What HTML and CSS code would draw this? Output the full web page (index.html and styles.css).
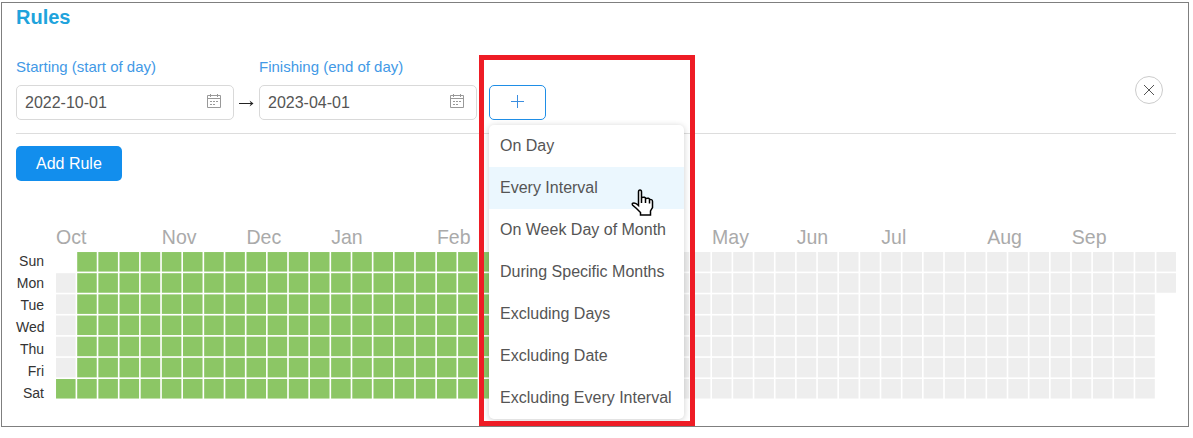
FILE: index.html
```html
<!DOCTYPE html>
<html lang="en">
<head>
<meta charset="utf-8">
<title>Rules</title>
<link rel="stylesheet" href="styles.css">
</head>
<body>
<main class="panel">
  <h1 class="title">Rules</h1>
  <section class="rule">
    <div class="range">
      <div class="field">
        <label class="field-label" for="start">Starting (start of day)</label>
        <div class="date-box">
          <input class="date-input" id="start" type="text" value="2022-10-01">
          <svg class="date-icon" viewBox="0 0 14 14" aria-hidden="true"><path d="M.5 1.5h13v12H.5zM.5 4.5h13M3.5 0v3M10.5 0v3M3 7.5h2M6 7.5h2M9 7.5h2M3 10.5h2M6 10.5h2"/></svg>
        </div>
      </div>
      <svg class="arrow" viewBox="0 0 15 9" aria-hidden="true"><path class="shaft" d="M0 4.5h14"/><path d="M10.5 1.5L14.5 4.5L10.5 7.5L12 4.5z"/></svg>
      <div class="field">
        <label class="field-label" for="finish">Finishing (end of day)</label>
        <div class="date-box">
          <input class="date-input" id="finish" type="text" value="2023-04-01">
          <svg class="date-icon" viewBox="0 0 14 14" aria-hidden="true"><path d="M.5 1.5h13v12H.5zM.5 4.5h13M3.5 0v3M10.5 0v3M3 7.5h2M6 7.5h2M9 7.5h2M3 10.5h2M6 10.5h2"/></svg>
        </div>
      </div>
      <div class="picker">
        <button class="plus" type="button" aria-label="Add condition"><svg class="plus-icon" viewBox="0 0 13 13" aria-hidden="true"><path d="M6.5 0v13M0 6.5h13"/></svg></button>
        <div class="menu" role="menu">
          <button class="item" type="button" role="menuitem">On Day</button>
          <button class="item item-active" type="button" role="menuitem">Every Interval</button>
          <button class="item" type="button" role="menuitem">On Week Day of Month</button>
          <button class="item" type="button" role="menuitem">During Specific Months</button>
          <button class="item" type="button" role="menuitem">Excluding Days</button>
          <button class="item" type="button" role="menuitem">Excluding Date</button>
          <button class="item" type="button" role="menuitem">Excluding Every Interval</button>
        </div>
        <svg class="hand" viewBox="0 0 23 27" aria-hidden="true"><path d="M7.5 16.500V3Q7.500 1 9 1T10.500 3V8.500Q14.500 7.500 14.500 9.500Q18.500 8.500 18.500 10.500Q21.500 10 21.500 12.500V18.500L19.500 22V26H9.500V23.500L5.500 19.500L1.500 16Q0.500 14 3 14Q5 14 7.500 16.500zM10.500 8v6M14.500 9v5M18.500 10.500v4"/></svg>
        <div class="highlight"></div>
      </div>
    </div>
    <button class="close" type="button" aria-label="Remove rule"><svg class="close-icon" viewBox="0 0 12 12" aria-hidden="true"><path d="M1 1l10 10M11 1L1 11"/></svg></button>
  </section>
  <button class="add" type="button">Add Rule</button>
  <section class="calendar">
    <div class="days"><span>Sun</span><span>Mon</span><span>Tue</span><span>Wed</span><span>Thu</span><span>Fri</span><span>Sat</span></div>
    <svg class="heatmap" id="heatmap" viewBox="0 -16 688 106" role="img" aria-label="Days matched by the rules">
      <text x="0" y="-5">Oct</text>
      <text x="65" y="-5">Nov</text>
      <text x="117" y="-5">Dec</text>
      <text x="169" y="-5">Jan</text>
      <text x="234" y="-5">Feb</text>
      <text x="403" y="-5">May</text>
      <text x="455" y="-5">Jun</text>
      <text x="507" y="-5">Jul</text>
      <text x="572" y="-5">Aug</text>
      <text x="624" y="-5">Sep</text>
    </svg>
  </section>
</main>
<script src="heatmap.js"></script>
</body>
</html>
```

FILE: heatmap.js
```js
// One square per day, one column per week starting on Sunday.
const map = document.getElementById('heatmap');
const WEEKS = 53, STEP = 13, SIZE = 12;
const FIRST_MATCH = 6, LAST_MATCH = 25 * 7 + 6, LAST_DAY = 52 * 7 + 1;
for (let week = 0; week < WEEKS; week++) {
  for (let day = 0; day < 7; day++) {
    const n = week * 7 + day;
    if (n < 1 || n > LAST_DAY) continue;
    const cell = document.createElementNS('http://www.w3.org/2000/svg', 'rect');
    cell.setAttribute('x', week * STEP);
    cell.setAttribute('y', day * STEP);
    cell.setAttribute('width', SIZE);
    cell.setAttribute('height', SIZE);
    cell.setAttribute('class', n >= FIRST_MATCH && n <= LAST_MATCH ? 'cell cell-on' : 'cell');
    map.appendChild(cell);
  }
}
```

FILE: styles.css
```css
* { box-sizing: border-box; }
body {
  margin: 2px 4px 0 1px;
  background: #fff;
  color: #555;
  font: 16px/20px "Liberation Sans", Arial, sans-serif;
}
button, input { font: inherit; color: inherit; }
.panel {
  border: 1px solid #7f7f7f;
  padding: 2px 12px 27px 14px;
}
.title {
  margin: 0;
  color: #20a3dc;
  font-size: 20px;
  line-height: 24px;
}
.rule {
  display: flex;
  justify-content: space-between;
  align-items: center;
  margin-top: 17px;
  padding: 10px 13px 13px 0;
  border-bottom: 1px solid #ddd;
}
.range { display: flex; align-items: flex-end; }
.field { width: 218px; }
.field-label {
  display: block;
  margin-bottom: 7px;
  color: #4299e6;
  font-size: 15px;
  line-height: 22px;
}
.date-box {
  display: flex;
  align-items: center;
  height: 35px;
  padding: 0 12px 0 8px;
  border: 1px solid #d9d9d9;
  border-radius: 5px;
}
.date-input {
  flex: 1;
  min-width: 0;
  padding: 0;
  border: 0;
  outline: 0;
  background: none;
}
.date-icon { width: 14px; height: 14px; margin-bottom: 3px; fill: none; stroke: #999; }
.arrow { width: 15px; height: 9px; margin: 0 5px 12px; fill: #222; }
.shaft { stroke: #222; }
.picker { position: relative; margin-left: 12px; }
.plus {
  display: flex;
  align-items: center;
  justify-content: center;
  width: 57px;
  height: 35px;
  padding: 0 0 2px;
  border: 1px solid #1f8ee6;
  border-radius: 5px;
  background: #fff;
}
.plus-icon { width: 13px; height: 13px; fill: none; stroke: #3b8ee0; }
.menu {
  position: absolute;
  z-index: 1;
  top: 40px;
  left: 0;
  width: 195px;
  overflow: hidden;
  border-radius: 5px;
  background: #fff;
  box-shadow: 0 1px 6px rgba(0, 0, 0, .2);
}
.item {
  display: block;
  width: 100%;
  height: 42px;
  padding: 0 11px;
  border: 0;
  background: none;
  text-align: left;
  white-space: nowrap;
}
.item-active { background: #ebf7fe; }
.hand {
  position: absolute;
  z-index: 2;
  top: 104px;
  left: 142px;
  width: 23px;
  height: 27px;
  fill: #fff;
  stroke: #000;
  stroke-width: 1.5;
}
.highlight {
  position: absolute;
  z-index: 3;
  top: -30px;
  left: -10px;
  width: 216px;
  height: 371px;
  border: 5px solid #ee1c25;
  pointer-events: none;
}
.close {
  display: flex;
  align-items: center;
  justify-content: center;
  width: 28px;
  height: 28px;
  margin-top: 4px;
  padding: 0;
  border: 1px solid #ccc;
  border-radius: 50%;
  background: #fff;
}
.close-icon { width: 12px; height: 12px; fill: none; stroke: #555; }
.add {
  display: block;
  height: 35px;
  margin-top: 12px;
  padding: 0 20px;
  border: 0;
  border-radius: 5px;
  background: #128eed;
  color: #fff;
}
.calendar { display: flex; align-items: flex-end; margin-top: 45px; }
.days {
  display: flex;
  flex-direction: column;
  flex: none;
  width: 28px;
  margin: 0 12px -5px 0;
  color: #333;
  font-size: 14px;
  line-height: 22px;
  text-align: right;
}
.heatmap { flex: 1; min-width: 0; }
.heatmap text { fill: #aaa; font-size: 12px; }
.cell { fill: #eee; }
.cell-on { fill: #8cc665; }
```
